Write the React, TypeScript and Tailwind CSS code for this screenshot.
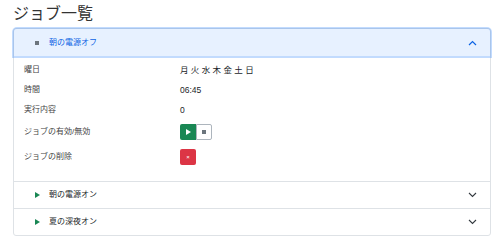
import { ReactNode } from "react";

const rows: { label: string; value: ReactNode; h: string }[] = [
  { label: "曜日", value: "月 火 水 木 金 土 日", h: "h-[20px]" },
  { label: "時間", value: "06:45", h: "h-[20px]" },
  { label: "実行内容", value: "0", h: "h-[20px]" },
];

function ChevronUp() {
  return (
    <svg width="9" height="6" viewBox="0 0 9 6" fill="none" stroke="#0c63e4" strokeWidth="1.2">
      <path d="M1 5 L4.5 1.5 L8 5" />
    </svg>
  );
}

function ChevronDown() {
  return (
    <svg width="9" height="6" viewBox="0 0 9 6" fill="none" stroke="#343a40" strokeWidth="1.1">
      <path d="M1 1 L4.5 4.5 L8 1" />
    </svg>
  );
}

function Play({ color }: { color: string }) {
  return (
    <svg width="5" height="6" viewBox="0 0 5 6">
      <path d="M0 0 L5 3 L0 6 Z" fill={color} />
    </svg>
  );
}

function ClosedItem({ name }: { name: string }) {
  return (
    <div className="flex h-[27px] items-center border-t border-[#dee2e6] pl-[21px] pr-[13px] text-[8px] text-[#212529]">
      <Play color="#198754" />
      <span className="ml-[9px] flex-1">{name}</span>
      <ChevronDown />
    </div>
  );
}

export default function App() {
  return (
    <div className="bg-white px-[13px] pt-[4px] font-['Liberation_Sans','Noto_Sans_CJK_JP',sans-serif]">
      <h1 className="mb-[5px] text-[16px] leading-[19px] text-[#333]">ジョブ一覧</h1>

      <div className="w-[478px] rounded-[3px] border border-[#dee2e6]">
        <div className="flex h-[27px] items-center rounded-t-[3px] bg-[#e7f1ff] pl-[21px] pr-[13px] text-[8px] text-[#0c63e4] shadow-[0_0_0_2px_rgba(13,110,253,0.25)]">
          <span className="h-[4px] w-[4px] bg-[#6c757d]" />
          <span className="ml-[10px] flex-1">朝の電源オフ</span>
          <ChevronUp />
        </div>

        <div className="px-[10px] pb-[11px] pt-[4px] text-[8px] text-[#212529]">
          {rows.map((r) => (
            <div key={r.label} className={`grid grid-cols-[156px_1fr] items-center ${r.h}`}>
              <span className="text-[#444]">{r.label}</span>
              <span className="text-[8.5px]">{r.value}</span>
            </div>
          ))}
          <div className="grid h-[24px] grid-cols-[156px_1fr] items-center">
            <span className="text-[#444]">ジョブの有効/無効</span>
            <div className="flex">
              <span className="flex h-[16px] w-[16px] items-center justify-center rounded-l-[2px] bg-[#198754]">
                <Play color="#ffffff" />
              </span>
              <span className="flex h-[16px] w-[16px] items-center justify-center rounded-r-[2px] border border-[#adb5bd] bg-white">
                <span className="h-[4px] w-[4px] bg-[#6c757d]" />
              </span>
            </div>
          </div>
          <div className="grid h-[26px] grid-cols-[156px_1fr] items-center">
            <span className="text-[#444]">ジョブの削除</span>
            <span className="flex h-[16px] w-[16px] items-center justify-center rounded-[2px] bg-[#dc3545] text-[6px] leading-none text-white">
              ×
            </span>
          </div>
        </div>

        <ClosedItem name="朝の電源オン" />
        <ClosedItem name="夏の深夜オン" />
      </div>
    </div>
  );
}
